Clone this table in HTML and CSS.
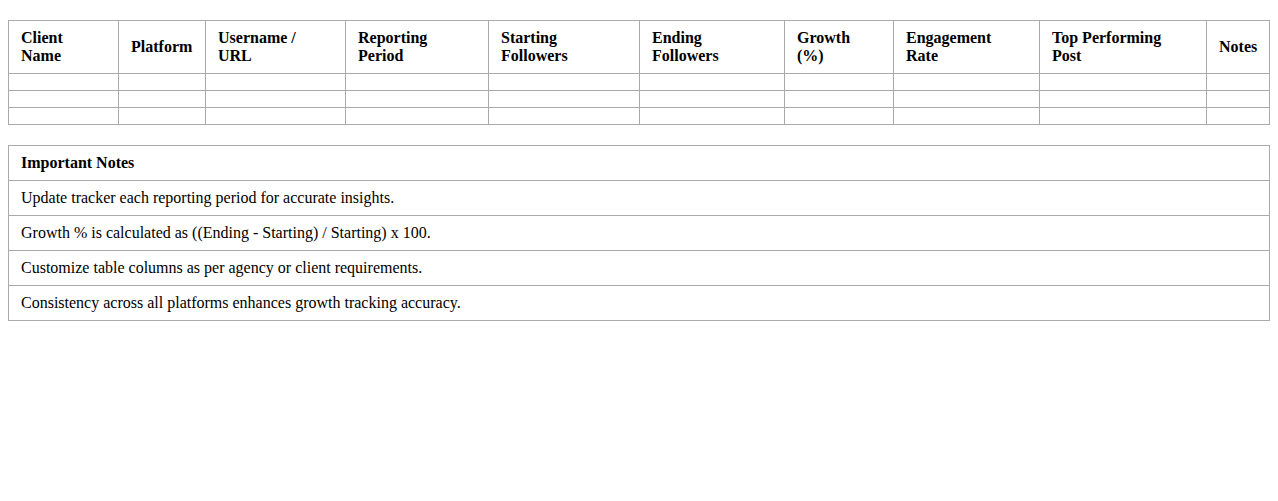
FILE: index.html
```html
<!DOCTYPE html>
<html lang="en">
<head>
<meta charset="utf-8">
<title>Social Media Growth Tracker</title>
<link rel="stylesheet" href="styles.css">
</head>
<body>
<table class="grid tracker">
  <colgroup>
    <col class="c-client">
    <col class="c-platform">
    <col class="c-user">
    <col class="c-period">
    <col class="c-start">
    <col class="c-end">
    <col class="c-growth">
    <col class="c-engage">
    <col class="c-top">
    <col class="c-notes">
  </colgroup>
  <thead>
    <tr>
      <th>Client<br>Name</th>
      <th>Platform</th>
      <th>Username /<br>URL</th>
      <th>Reporting<br>Period</th>
      <th>Starting<br>Followers</th>
      <th>Ending<br>Followers</th>
      <th>Growth<br>(%)</th>
      <th>Engagement<br>Rate</th>
      <th>Top Performing<br>Post</th>
      <th>Notes</th>
    </tr>
  </thead>
  <tbody>
    <tr><td></td><td></td><td></td><td></td><td></td><td></td><td></td><td></td><td></td><td></td></tr>
    <tr><td></td><td></td><td></td><td></td><td></td><td></td><td></td><td></td><td></td><td></td></tr>
    <tr><td></td><td></td><td></td><td></td><td></td><td></td><td></td><td></td><td></td><td></td></tr>
  </tbody>
</table>
<table class="grid notes">
  <thead>
    <tr><th>Important Notes</th></tr>
  </thead>
  <tbody>
    <tr><td>Update tracker each reporting period for accurate insights.</td></tr>
    <tr><td>Growth % is calculated as ((Ending - Starting) / Starting) x 100.</td></tr>
    <tr><td>Customize table columns as per agency or client requirements.</td></tr>
    <tr><td>Consistency across all platforms enhances growth tracking accuracy.</td></tr>
  </tbody>
</table>
</body>
</html>
```
FILE: styles.css
```css
html, body {
  background: #fff;
}
body {
  margin: 8px;
  font-family: "Liberation Serif", "Times New Roman", serif;
  font-size: 16px;
  color: #000;
}
.grid {
  width: 100%;
  border-collapse: collapse;
  margin: 12px 0 20px;
}
.tracker {
  table-layout: fixed;
}
.c-client { width: 110px; }
.c-platform { width: 87px; }
.c-user { width: 140px; }
.c-period { width: 143px; }
.c-start { width: 151px; }
.c-end { width: 145px; }
.c-growth { width: 109px; }
.c-engage { width: 146px; }
.c-top { width: 167px; }
.c-notes { width: 63px; }
.grid th,
.grid td {
  border: 1px solid #aaa;
  padding: 8px 12px;
  text-align: left;
  vertical-align: middle;
  line-height: normal;
}
.grid th {
  font-weight: bold;
}
.notes {
  margin-top: 0;
}
```
